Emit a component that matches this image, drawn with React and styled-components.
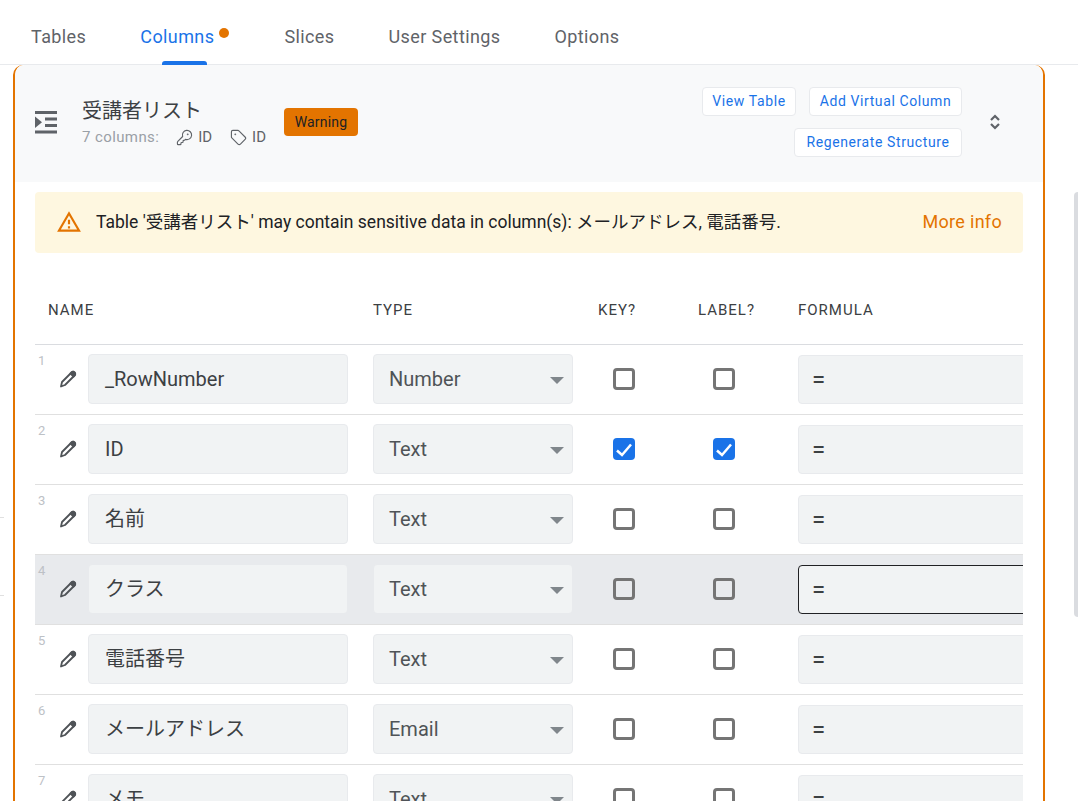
import styled, { createGlobalStyle } from "styled-components";
import { MdOutlineWarningAmber } from "react-icons/md";
import { KeyRound, Tag } from "lucide-react";

const columns = [
  { name: "_RowNumber", type: "Number" },
  { name: "ID", type: "Text", isKey: true, isLabel: true },
  { name: "名前", type: "Text", cjk: true },
  { name: "クラス", type: "Text", cjk: true, active: true },
  { name: "電話番号", type: "Text", cjk: true },
  { name: "メールアドレス", type: "Email", cjk: true },
  { name: "メモ", type: "Text", cjk: true },
];

const tabs = ["Tables", "Columns", "Slices", "User Settings", "Options"];

const IndentIcon = () => (
  <svg width="22" height="23" viewBox="0 0 22 23" fill="currentColor">
    <rect x="0" y="0" width="22" height="3" />
    <rect x="10" y="6.5" width="12" height="3" />
    <rect x="10" y="13" width="12" height="3" />
    <rect x="0" y="19.5" width="22" height="3" />
    <path d="M0 5.5 L7 11.25 L0 17 Z" />
  </svg>
);

const SortIcon = () => (
  <svg width="12" height="16" viewBox="0 0 12 16" fill="none" stroke="currentColor" strokeWidth="2.2">
    <polyline points="2,6 6,2 10,6" />
    <polyline points="2,10 6,14 10,10" />
  </svg>
);

const PencilIcon = () => (
  <svg width="20" height="20" viewBox="0 0 20 20" fill="none" stroke="currentColor" strokeWidth="1.8" strokeLinejoin="round">
    <path d="M3 17.5 L4 13 L13.5 3.5 C14.5 2.5 15.7 2.5 16.5 3.5 C17.5 4.4 17.5 5.6 16.5 6.5 L7 16 Z" />
    <path d="M13.5 3.5 C14.5 2.5 15.7 2.5 16.5 3.5 C17.5 4.4 17.5 5.6 16.5 6.5 L15.5 7.5 L12.5 4.5 Z" fill="currentColor" />
  </svg>
);

const TickIcon = () => (
  <svg width="22" height="22" viewBox="0 0 22 22" fill="none" stroke="#fff" strokeWidth="2.5">
    <polyline points="4,12.5 9,17 18,6.5" />
  </svg>
);

const App = () => {
  return (
    <Page>
      <GlobalStyle />
      <Tabs>
        {tabs.map((tab) => (
          <Tab key={tab} $active={tab === "Columns"}>
            {tab}
            {tab === "Columns" && <Dot />}
          </Tab>
        ))}
      </Tabs>
      <Tick $top={517} />
      <Tick $top={595} />
      <SideBar />
      <Panel>
        <Header>
          <TableIcon>
            <IndentIcon />
          </TableIcon>
          <TitleBlock>
            <Title>受講者リスト</Title>
            <Meta>
              <Count>7 columns:</Count>
              <MetaItem>
                <KeyRound size={17} strokeWidth={1.6} />
                ID
              </MetaItem>
              <MetaItem>
                <Tag size={17} strokeWidth={1.6} />
                ID
              </MetaItem>
            </Meta>
          </TitleBlock>
          <Badge>Warning</Badge>
          <Actions>
            <ActionButton $width={94}>View Table</ActionButton>
            <ActionButton $width={153}>Add Virtual Column</ActionButton>
            <ActionButton $width={168}>Regenerate Structure</ActionButton>
          </Actions>
          <Expand>
            <SortIcon />
          </Expand>
        </Header>
        <Alert>
          <AlertIcon>
            <MdOutlineWarningAmber size={26} />
          </AlertIcon>
          <AlertText>
            Table '受講者リスト' may contain sensitive data in column(s): メールアドレス, 電話番号.
          </AlertText>
          <MoreInfo>More info</MoreInfo>
        </Alert>
        <Table>
          <HeadRow>
            <NameHead>NAME</NameHead>
            <HeadCell>TYPE</HeadCell>
            <HeadCell>KEY?</HeadCell>
            <HeadCell>LABEL?</HeadCell>
            <HeadCell>FORMULA</HeadCell>
          </HeadRow>
          {columns.map((col, i) => (
            <Row key={col.name} $active={col.active}>
              <Lead>
                <RowNumber>{i + 1}</RowNumber>
                <EditIcon>
                  <PencilIcon />
                </EditIcon>
              </Lead>
              <Field $raised={col.cjk}>{col.name}</Field>
              <SelectField>
                {col.type}
                <Caret />
              </SelectField>
              <CheckCell>
                <Check $checked={col.isKey}>{col.isKey && <TickIcon />}</Check>
              </CheckCell>
              <CheckCell>
                <Check $checked={col.isLabel}>{col.isLabel && <TickIcon />}</Check>
              </CheckCell>
              <Formula $focused={col.active}>=</Formula>
            </Row>
          ))}
        </Table>
      </Panel>
    </Page>
  );
};

const GlobalStyle = createGlobalStyle`
  html, body {
    margin: 0;
    padding: 0;
    background: #fff;
  }
  * {
    box-sizing: border-box;
  }
  body {
    font-family: Roboto, "Noto Sans CJK JP", sans-serif;
    color: #202124;
  }
`;

const Page = styled.div`
  position: relative;
  width: 1078px;
  height: 801px;
  overflow: hidden;
`;

const Tabs = styled.div`
  display: flex;
  gap: 54px;
  height: 65px;
  padding: 0 0 0 31px;
  border-bottom: 1px solid #e8eaed;
`;

const Tab = styled.div`
  position: relative;
  display: flex;
  align-items: center;
  padding-top: 9px;
  font-size: 18px;
  letter-spacing: 0.4px;
  color: ${(p) => (p.$active ? "#1a73e8" : "#5f6368")};

  ${(p) =>
    p.$active &&
    `
    &::after {
      content: "";
      position: absolute;
      left: 22px;
      right: 23px;
      bottom: -1px;
      height: 4px;
      border-radius: 3px 3px 0 0;
      background: #1a73e8;
    }
  `}
`;

const Dot = styled.span`
  align-self: flex-start;
  width: 10px;
  height: 10px;
  margin: 19px 1px 0 5px;
  border-radius: 50%;
  background: #e37400;
`;

const Tick = styled.div`
  position: absolute;
  left: 0;
  top: ${(p) => p.$top}px;
  width: 4px;
  height: 1px;
  background: #e0e0e0;
`;

const SideBar = styled.div`
  position: absolute;
  right: 0;
  top: 192px;
  width: 4px;
  height: 425px;
  border-radius: 4px 0 0 4px;
  background: #dadce0;
`;

const Panel = styled.div`
  width: 1032px;
  height: 900px;
  margin-left: 13px;
  border: 2px solid #e37400;
  border-top: 0;
  border-radius: 10px 10px 0 0;
  background: #fff;
`;

const Header = styled.div`
  display: flex;
  align-items: flex-start;
  height: 117px;
  padding-left: 20px;
  border-radius: 10px 10px 0 0;
  background: #f8f9fa;
`;

const TableIcon = styled.div`
  display: flex;
  width: 47px;
  margin-top: 46px;
  color: #5f6368;
`;

const TitleBlock = styled.div`
  display: flex;
  flex-direction: column;
  width: 202px;
  margin-top: 31px;
`;

const Title = styled.div`
  font-size: 20px;
  line-height: 30px;
  color: #3c4043;
`;

const Meta = styled.div`
  display: flex;
  align-items: center;
  height: 20px;
  margin-top: 1px;
  font-size: 15px;
  color: #5f6368;
`;

const Count = styled.span`
  width: 97px;
  letter-spacing: 0.4px;
  color: #9aa0a6;
`;

const MetaItem = styled.span`
  display: flex;
  align-items: center;
  gap: 5px;
  margin-right: 18px;
`;

const Badge = styled.div`
  display: flex;
  align-items: center;
  justify-content: center;
  width: 74px;
  height: 28px;
  margin-top: 43px;
  border-radius: 4px;
  background: #e37400;
  font-size: 14px;
  letter-spacing: 0.2px;
  color: #202124;
`;

const Actions = styled.div`
  display: flex;
  flex-wrap: wrap;
  justify-content: flex-end;
  gap: 12px 13px;
  width: 260px;
  margin: 22px 0 0 344px;
`;

const ActionButton = styled.div`
  width: ${(p) => p.$width}px;
  height: 29px;
  border: 1px solid #e8eaed;
  border-radius: 4px;
  background: #fff;
  font-size: 14px;
  line-height: 26px;
  letter-spacing: 0.6px;
  text-align: center;
  white-space: nowrap;
  color: #1a73e8;
`;

const Expand = styled.div`
  display: flex;
  margin: 49px 0 0 27px;
  color: #5f6368;
`;

const Alert = styled.div`
  display: flex;
  align-items: center;
  width: 988px;
  height: 61px;
  margin: 10px 0 0 20px;
  padding: 0 21px 2px;
  border-radius: 4px;
  background: #fef7e0;
`;

const AlertIcon = styled.div`
  display: flex;
  margin-right: 14px;
  color: #e37400;
`;

const AlertText = styled.div`
  flex: 1;
  padding-bottom: 2px;
  font-size: 17.5px;
`;

const MoreInfo = styled.div`
  font-size: 18px;
  letter-spacing: 0.3px;
  color: #e37400;
`;

const Table = styled.div`
  width: 988px;
  margin-left: 20px;
  overflow: hidden;
`;

const gridColumns = "53px 285px 225px 100px 100px 300px";

const HeadRow = styled.div`
  display: grid;
  grid-template-columns: ${gridColumns};
  align-items: center;
  height: 92px;
  padding-top: 22px;
  border-bottom: 1px solid #dadce0;
  font-size: 15px;
  letter-spacing: 1px;
  color: #3c4043;
`;

const HeadCell = styled.div``;

const NameHead = styled.div`
  grid-column: 1 / 3;
  padding-left: 13px;
`;

const Row = styled.div`
  display: grid;
  grid-template-columns: ${gridColumns};
  align-items: center;
  height: 70px;
  border-bottom: 1px solid #e0e0e0;
  background: ${(p) => (p.$active ? "#e8eaed" : "#fff")};
`;

const Lead = styled.div`
  display: flex;
  align-self: stretch;
  align-items: center;
  padding-left: 3px;
`;

const RowNumber = styled.div`
  align-self: flex-start;
  width: 20px;
  margin-top: 9px;
  font-size: 13px;
  line-height: 14px;
  color: #bdc1c6;
`;

const EditIcon = styled.div`
  display: flex;
  margin-top: -2px;
  color: #4f5357;
`;

const Field = styled.div`
  display: flex;
  align-items: center;
  width: 260px;
  height: 50px;
  margin-top: -1px;
  padding-left: 16px;
  padding-bottom: ${(p) => (p.$raised ? "4px" : "0")};
  border: 1px solid #e8eaed;
  border-radius: 4px;
  background: #f1f3f4;
  font-size: 20px;
  color: #3c4043;
`;

const SelectField = styled(Field)`
  position: relative;
  width: 200px;
  padding-left: 15px;
  color: #4f5357;
`;

const Caret = styled.span`
  position: absolute;
  right: 8px;
  top: 22px;
  border-left: 7px solid transparent;
  border-right: 7px solid transparent;
  border-top: 7px solid #80868b;
`;

const CheckCell = styled.div`
  display: flex;
  margin-top: -1px;
  padding-left: 15px;
`;

const Check = styled.div`
  position: relative;
  width: 22px;
  height: 22px;
  border: ${(p) => (p.$checked ? "0" : "3px solid #757575")};
  border-radius: 4px;
  background: ${(p) => (p.$checked ? "#1a73e8" : "transparent")};
`;

const Formula = styled.div`
  display: flex;
  align-items: center;
  height: 49px;
  padding-left: 13px;
  border: 1px solid ${(p) => (p.$focused ? "#202124" : "#e8eaed")};
  border-radius: 4px;
  background: #f1f3f4;
  font-size: 24px;
  color: #3c4043;
`;

export default App;
